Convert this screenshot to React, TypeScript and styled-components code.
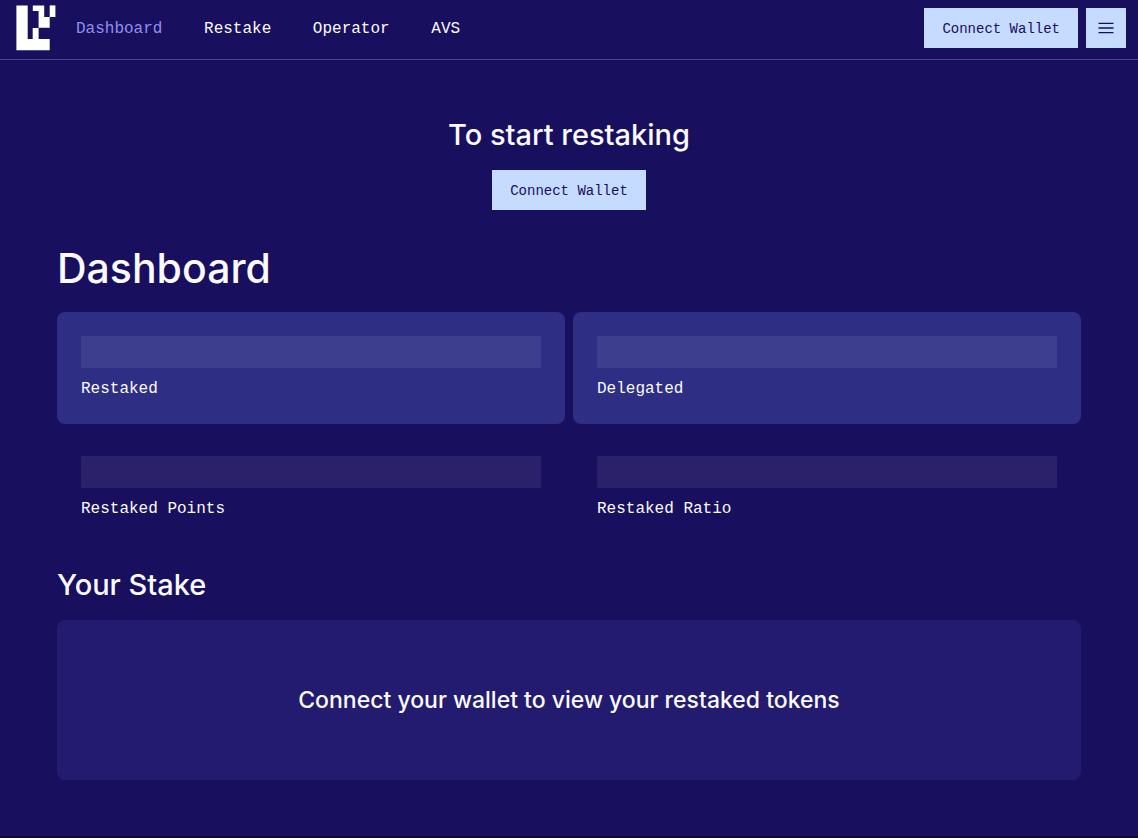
import React from "react";
import styled, { createGlobalStyle } from "styled-components";

const mono = `"Liberation Mono", monospace`;
const sans = `Inter, "Liberation Sans", sans-serif`;

const GlobalStyle = createGlobalStyle`
  *, *::before, *::after { box-sizing: border-box; }
  body {
    margin: 0;
    background: #180f5e;
    color: #fafafc;
    font-family: ${mono};
    font-size: 16px;
    line-height: 26px;
  }
  h1, h2, p, dl, dd { margin: 0; }
`;

const Header = styled.header`
  display: flex;
  align-items: center;
  min-height: 60px;
  padding: 0 12px 4px 16px;
  border-bottom: 1px solid #4a438c;
`;

const LogoLink = styled.a`
  display: flex;
  width: 40px;
  margin-right: 4px;
`;

const Nav = styled.nav`
  flex: 1;
  padding-top: 2px;
`;

const NavLink = styled.a<{ $active?: boolean }>`
  padding: 0 16px;
  color: ${(p) => (p.$active ? "#918fee" : "#fafafc")};
  text-decoration: none;
`;

const Actions = styled.div`
  display: flex;
  gap: 8px;
`;

const Button = styled.button`
  height: 40px;
  padding: 2px 18px 0;
  border: 0;
  background: #c5dbff;
  color: #180f5e;
  font-family: ${mono};
  font-size: 14px;
  line-height: 20px;
  cursor: pointer;
`;

const IconButton = styled(Button)`
  display: flex;
  align-items: center;
  justify-content: center;
  width: 40px;
  padding: 0;
`;

const Main = styled.main`
  max-width: 1072px;
  margin: 0 auto;
  padding: 56px 24px;
`;

const Intro = styled.section`
  display: flex;
  flex-direction: column;
  align-items: center;
  gap: 16px;
  margin-bottom: 32px;
`;

const Title = styled.h1`
  font: 500 41px/52px ${sans};
  margin-bottom: 18px;
`;

const Heading = styled.h2`
  font: 500 29px/38px ${sans};
`;

const StatGrid = styled.dl`
  display: grid;
  grid-template-columns: 1fr 1fr;
  gap: 8px;
  margin-bottom: 22px;
`;

const Stat = styled.div<{ $filled?: boolean }>`
  display: flex;
  flex-direction: column-reverse;
  gap: 8px;
  padding: 24px 24px 22px;
  border-radius: 8px;
  background: ${(p) => (p.$filled ? "#2e2e85" : "transparent")};
`;

const Skeleton = styled.dd`
  height: 32px;
  border-radius: 1px;
  background: rgba(255, 255, 255, 0.08);
`;

const Panel = styled.div`
  display: flex;
  align-items: center;
  justify-content: center;
  min-height: 160px;
  margin-top: 16px;
  padding: 24px;
  border-radius: 8px;
  background: #231b6f;
`;

const Message = styled.p`
  font: 500 23px/32px ${sans};
  text-align: center;
`;

const Footer = styled.footer`
  height: 2px;
  background: #110b2e;
`;

const Logo = () => (
  <svg width="40" height="46" viewBox="0 0 40 46" fill="#fff" aria-hidden="true">
    <path d="M.4 .4H11.7V33.9H16.7V23H22.6V33.9H33.7V45.3H.4Z" />
    <path d="M16.8 .4H28.2V12H33.7V22.8H22.6V6.1H16.8Z" />
    <path d="M33.7 .4H39.4V12H33.7Z" />
  </svg>
);

const MenuIcon = () => (
  <svg width="16" height="12" viewBox="0 0 16 12" stroke="#180f5e" strokeWidth="1.4" aria-hidden="true">
    <path d="M.5 1.4H15.5M.5 6H15.5M.5 10.6H15.5" />
  </svg>
);

const links = ["Dashboard", "Restake", "Operator", "AVS"];

const stats = [
  { label: "Restaked", filled: true },
  { label: "Delegated", filled: true },
  { label: "Restaked Points", filled: false },
  { label: "Restaked Ratio", filled: false },
];

export default function App() {
  return (
    <>
      <GlobalStyle />
      <Header>
        <LogoLink href="#home" aria-label="Home">
          <Logo />
        </LogoLink>
        <Nav>
          {links.map((name, i) => (
            <React.Fragment key={name}>
              <NavLink href={`#${name.toLowerCase()}`} $active={i === 0}>
                {name}
              </NavLink>{" "}
            </React.Fragment>
          ))}
        </Nav>
        <Actions>
          <Button type="button">Connect Wallet</Button>
          <IconButton type="button" aria-label="Menu">
            <MenuIcon />
          </IconButton>
        </Actions>
      </Header>
      <Main>
        <Intro>
          <Heading>To start restaking</Heading>
          <Button type="button">Connect Wallet</Button>
        </Intro>
        <Title>Dashboard</Title>
        <StatGrid>
          {stats.map((s) => (
            <Stat key={s.label} $filled={s.filled}>
              <dt>{s.label}</dt>
              <Skeleton />
            </Stat>
          ))}
        </StatGrid>
        <Heading>Your Stake</Heading>
        <Panel>
          <Message>Connect your wallet to view your restaked tokens</Message>
        </Panel>
      </Main>
      <Footer />
    </>
  );
}
